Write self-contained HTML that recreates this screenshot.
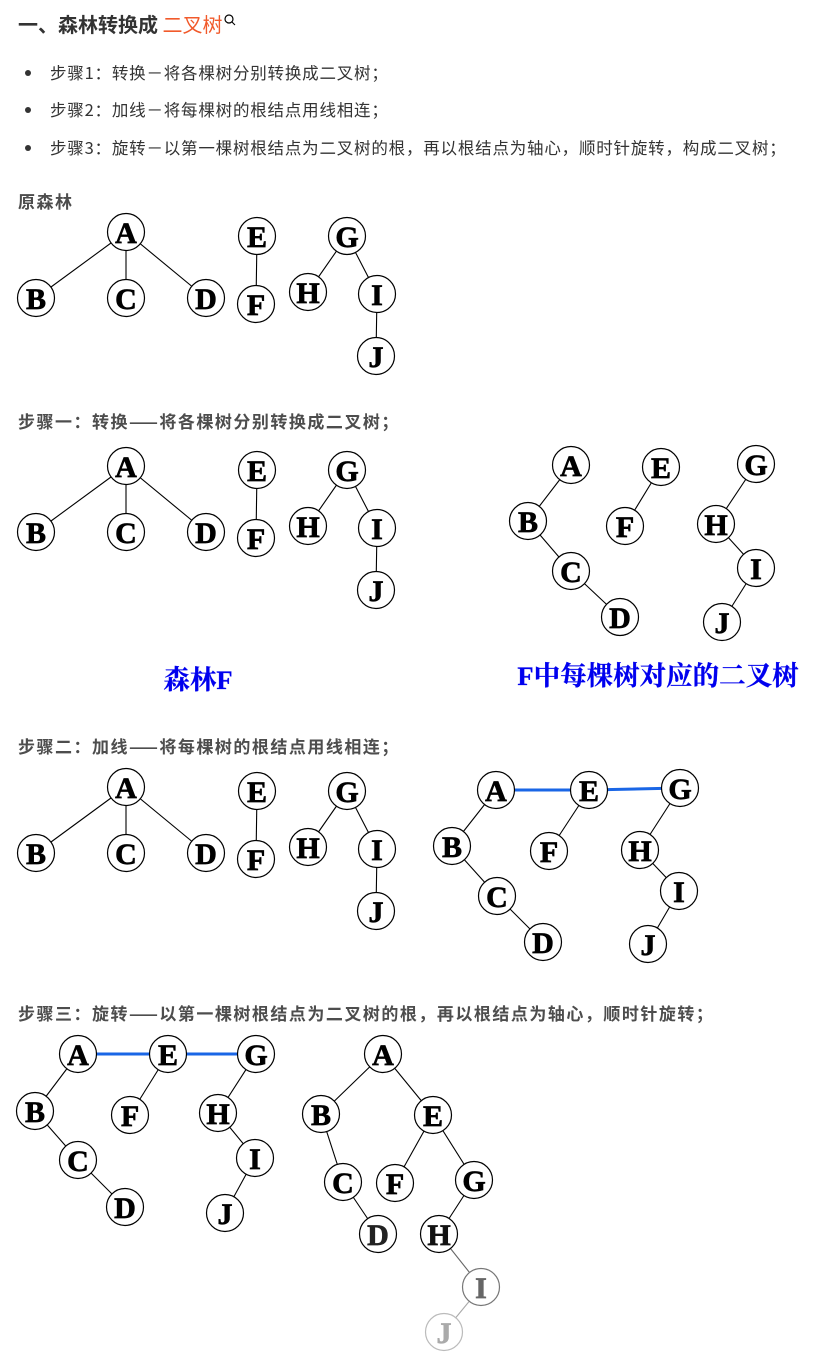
<!DOCTYPE html>
<html><head><meta charset="utf-8"><style>
body{margin:0;width:840px;height:1360px;background:#fff;position:relative;overflow:hidden;font-family:"Noto Sans CJK SC","Liberation Sans",sans-serif;}
.t{position:absolute;white-space:nowrap;}
.h{left:18px;top:9px;font-size:20px;font-weight:bold;color:#333;}
.h span{color:#f15a2b;font-weight:normal;}
.b{left:50px;font-size:16.5px;color:#333;letter-spacing:0.8px;font-family:"WenQuanYi Zen Hei","Noto Sans CJK SC",sans-serif;}
.dot{position:absolute;left:25px;width:6px;height:6px;border-radius:3px;background:#333;}
.s{left:18px;font-size:17px;font-weight:bold;color:#4d4d4d;letter-spacing:1.5px;font-family:"WenQuanYi Zen Hei","Noto Sans CJK SC",sans-serif;}
svg{position:absolute;left:0;top:0;}
svg text{font-family:"Liberation Serif",serif;font-weight:bold;font-size:30px;text-anchor:middle;stroke:currentColor;stroke-width:0.7;}
svg circle{fill:#fff;stroke:#000;stroke-width:1.2;}
svg line{stroke:#000;stroke-width:1.1;}
.bl{stroke:#1a66e6;stroke-width:3;}
svg text.lab{font-family:"Liberation Serif","Noto Serif CJK SC",serif;font-size:26.5px;fill:#0000ee;color:#0000ee;stroke-width:0.3;}
</style></head><body>
<div class="t h">一、森林转换成 <span>二叉树</span><svg style="position:static;vertical-align:top;margin-top:4px" width="14" height="14"><circle cx="6" cy="6" r="4" fill="none" stroke="#f15a2b" stroke-width="1.3"/><line x1="9" y1="9" x2="12" y2="12" stroke="#f15a2b" stroke-width="1.3"/></svg></div>
<div class="dot" style="top:70px"></div><div class="t b" style="top:60px">步骤1：转换－将各棵树分别转换成二叉树；</div>
<div class="dot" style="top:107px"></div><div class="t b" style="top:97px">步骤2：加线－将每棵树的根结点用线相连；</div>
<div class="dot" style="top:145px"></div><div class="t b" style="top:135px">步骤3：旋转－以第一棵树根结点为二叉树的根，再以根结点为轴心，顺时针旋转，构成二叉树；</div>
<div class="t s" style="top:188px">原森林</div>
<div class="t s" style="top:408px">步骤一：转换——将各棵树分别转换成二叉树；</div>
<div class="t s" style="top:733px">步骤二：加线——将每棵树的根结点用线相连；</div>
<div class="t s" style="top:1000px">步骤三：旋转——以第一棵树根结点为二叉树的根，再以根结点为轴心，顺时针旋转；</div>
<svg width="840" height="1360">
<g>
<line x1="126" y1="232" x2="36" y2="298"/><line x1="126" y1="232" x2="126" y2="298"/><line x1="126" y1="232" x2="206" y2="298"/><line x1="257" y1="236" x2="256" y2="304"/><line x1="347" y1="236" x2="308" y2="292"/><line x1="347" y1="236" x2="377" y2="294"/><line x1="377" y1="294" x2="376" y2="356"/>
<circle cx="126" cy="232" r="18.5"/><text x="126" y="243">A</text>
<circle cx="36" cy="298" r="18.5"/><text x="36" y="309">B</text>
<circle cx="126" cy="298" r="18.5"/><text x="126" y="309">C</text>
<circle cx="206" cy="298" r="18.5"/><text x="206" y="309">D</text>
<circle cx="257" cy="236" r="18.5"/><text x="257" y="247">E</text>
<circle cx="256" cy="304" r="18.5"/><text x="256" y="315">F</text>
<circle cx="347" cy="236" r="18.5"/><text x="347" y="247">G</text>
<circle cx="308" cy="292" r="18.5"/><text x="308" y="303">H</text>
<circle cx="377" cy="294" r="18.5"/><text x="377" y="305">I</text>
<circle cx="376" cy="356" r="18.5"/><text x="376" y="367">J</text>
</g>
<g transform="translate(0,234)">
<line x1="126" y1="232" x2="36" y2="298"/><line x1="126" y1="232" x2="126" y2="298"/><line x1="126" y1="232" x2="206" y2="298"/><line x1="257" y1="236" x2="256" y2="304"/><line x1="347" y1="236" x2="308" y2="292"/><line x1="347" y1="236" x2="377" y2="294"/><line x1="377" y1="294" x2="376" y2="356"/>
<circle cx="126" cy="232" r="18.5"/><text x="126" y="243">A</text>
<circle cx="36" cy="298" r="18.5"/><text x="36" y="309">B</text>
<circle cx="126" cy="298" r="18.5"/><text x="126" y="309">C</text>
<circle cx="206" cy="298" r="18.5"/><text x="206" y="309">D</text>
<circle cx="257" cy="236" r="18.5"/><text x="257" y="247">E</text>
<circle cx="256" cy="304" r="18.5"/><text x="256" y="315">F</text>
<circle cx="347" cy="236" r="18.5"/><text x="347" y="247">G</text>
<circle cx="308" cy="292" r="18.5"/><text x="308" y="303">H</text>
<circle cx="377" cy="294" r="18.5"/><text x="377" y="305">I</text>
<circle cx="376" cy="356" r="18.5"/><text x="376" y="367">J</text>
</g>
<g transform="translate(0,555)">
<line x1="126" y1="232" x2="36" y2="298"/><line x1="126" y1="232" x2="126" y2="298"/><line x1="126" y1="232" x2="206" y2="298"/><line x1="257" y1="236" x2="256" y2="304"/><line x1="347" y1="236" x2="308" y2="292"/><line x1="347" y1="236" x2="377" y2="294"/><line x1="377" y1="294" x2="376" y2="356"/>
<circle cx="126" cy="232" r="18.5"/><text x="126" y="243">A</text>
<circle cx="36" cy="298" r="18.5"/><text x="36" y="309">B</text>
<circle cx="126" cy="298" r="18.5"/><text x="126" y="309">C</text>
<circle cx="206" cy="298" r="18.5"/><text x="206" y="309">D</text>
<circle cx="257" cy="236" r="18.5"/><text x="257" y="247">E</text>
<circle cx="256" cy="304" r="18.5"/><text x="256" y="315">F</text>
<circle cx="347" cy="236" r="18.5"/><text x="347" y="247">G</text>
<circle cx="308" cy="292" r="18.5"/><text x="308" y="303">H</text>
<circle cx="377" cy="294" r="18.5"/><text x="377" y="305">I</text>
<circle cx="376" cy="356" r="18.5"/><text x="376" y="367">J</text>
</g>
<line x1="571" y1="465" x2="528" y2="521"/><line x1="528" y1="521" x2="571" y2="571"/><line x1="571" y1="571" x2="620" y2="617"/><line x1="661" y1="467" x2="625" y2="526"/><line x1="756" y1="464" x2="716" y2="524"/><line x1="716" y1="524" x2="756" y2="568"/><line x1="756" y1="568" x2="722" y2="622"/>
<circle cx="571" cy="465" r="18.5"/><text x="571" y="476">A</text>
<circle cx="528" cy="521" r="18.5"/><text x="528" y="532">B</text>
<circle cx="571" cy="571" r="18.5"/><text x="571" y="582">C</text>
<circle cx="620" cy="617" r="18.5"/><text x="620" y="628">D</text>
<circle cx="661" cy="467" r="18.5"/><text x="661" y="478">E</text>
<circle cx="625" cy="526" r="18.5"/><text x="625" y="537">F</text>
<circle cx="756" cy="464" r="18.5"/><text x="756" y="475">G</text>
<circle cx="716" cy="524" r="18.5"/><text x="716" y="535">H</text>
<circle cx="756" cy="568" r="18.5"/><text x="756" y="579">I</text>
<circle cx="722" cy="622" r="18.5"/><text x="722" y="633">J</text>
<text class="lab" x="198" y="689">森林F</text>
<text class="lab" x="658" y="685">F中每棵树对应的二叉树</text>
<line class="bl" x1="496" y1="790" x2="589" y2="790"/><line class="bl" x1="589" y1="790" x2="680" y2="788"/>
<line x1="496" y1="790" x2="452" y2="846"/><line x1="452" y1="846" x2="497" y2="896"/><line x1="497" y1="896" x2="543" y2="942"/><line x1="589" y1="790" x2="549" y2="851"/><line x1="680" y1="788" x2="640" y2="850"/><line x1="640" y1="850" x2="679" y2="891"/><line x1="679" y1="891" x2="648" y2="944"/>
<circle cx="496" cy="790" r="18.5"/><text x="496" y="801">A</text>
<circle cx="589" cy="790" r="18.5"/><text x="589" y="801">E</text>
<circle cx="680" cy="788" r="18.5"/><text x="680" y="799">G</text>
<circle cx="452" cy="846" r="18.5"/><text x="452" y="857">B</text>
<circle cx="497" cy="896" r="18.5"/><text x="497" y="907">C</text>
<circle cx="543" cy="942" r="18.5"/><text x="543" y="953">D</text>
<circle cx="549" cy="851" r="18.5"/><text x="549" y="862">F</text>
<circle cx="640" cy="850" r="18.5"/><text x="640" y="861">H</text>
<circle cx="679" cy="891" r="18.5"/><text x="679" y="902">I</text>
<circle cx="648" cy="944" r="18.5"/><text x="648" y="955">J</text>
<line class="bl" x1="78" y1="1054" x2="168" y2="1054"/><line class="bl" x1="168" y1="1054" x2="256" y2="1054"/>
<line x1="78" y1="1054" x2="35" y2="1111"/><line x1="35" y1="1111" x2="78" y2="1160"/><line x1="78" y1="1160" x2="125" y2="1207"/><line x1="168" y1="1054" x2="130" y2="1115"/><line x1="256" y1="1054" x2="218" y2="1113"/><line x1="218" y1="1113" x2="255" y2="1158"/><line x1="255" y1="1158" x2="225" y2="1213"/>
<circle cx="78" cy="1054" r="18.5"/><text x="78" y="1065">A</text>
<circle cx="168" cy="1054" r="18.5"/><text x="168" y="1065">E</text>
<circle cx="256" cy="1054" r="18.5"/><text x="256" y="1065">G</text>
<circle cx="35" cy="1111" r="18.5"/><text x="35" y="1122">B</text>
<circle cx="130" cy="1115" r="18.5"/><text x="130" y="1126">F</text>
<circle cx="218" cy="1113" r="18.5"/><text x="218" y="1124">H</text>
<circle cx="78" cy="1160" r="18.5"/><text x="78" y="1171">C</text>
<circle cx="255" cy="1158" r="18.5"/><text x="255" y="1169">I</text>
<circle cx="125" cy="1207" r="18.5"/><text x="125" y="1218">D</text>
<circle cx="225" cy="1213" r="18.5"/><text x="225" y="1224">J</text>
<line x1="383" y1="1054" x2="321" y2="1114"/><line x1="383" y1="1054" x2="433" y2="1115"/><line x1="321" y1="1114" x2="343" y2="1182"/><line x1="343" y1="1182" x2="378" y2="1234"/><line x1="433" y1="1115" x2="395" y2="1183"/><line x1="433" y1="1115" x2="474" y2="1180"/><line x1="474" y1="1180" x2="439" y2="1234"/>
<line x1="439" y1="1234" x2="481" y2="1287" style="stroke:#666"/><line x1="481" y1="1287" x2="444" y2="1332" style="stroke:#aaa"/>
<circle cx="383" cy="1054" r="18.5"/><text x="383" y="1065">A</text>
<circle cx="321" cy="1114" r="18.5"/><text x="321" y="1125">B</text>
<circle cx="433" cy="1115" r="18.5"/><text x="433" y="1126">E</text>
<circle cx="343" cy="1182" r="18.5"/><text x="343" y="1193">C</text>
<circle cx="395" cy="1183" r="18.5"/><text x="395" y="1194">F</text>
<circle cx="474" cy="1180" r="18.5"/><text x="474" y="1191">G</text>
<circle cx="378" cy="1234" r="18.5"/><text x="378" y="1245" style="color:#222;fill:#222">D</text>
<circle cx="439" cy="1234" r="18.5"/><text x="439" y="1245" style="color:#111;fill:#111">H</text>
<circle cx="481" cy="1287" r="18.5" style="stroke:#777"/><text x="481" y="1298" style="color:#666;fill:#666">I</text>
<circle cx="444" cy="1332" r="18.5" style="stroke:#bbb"/><text x="444" y="1343" style="color:#aaa;fill:#aaa">J</text>
</svg>
</body></html>
